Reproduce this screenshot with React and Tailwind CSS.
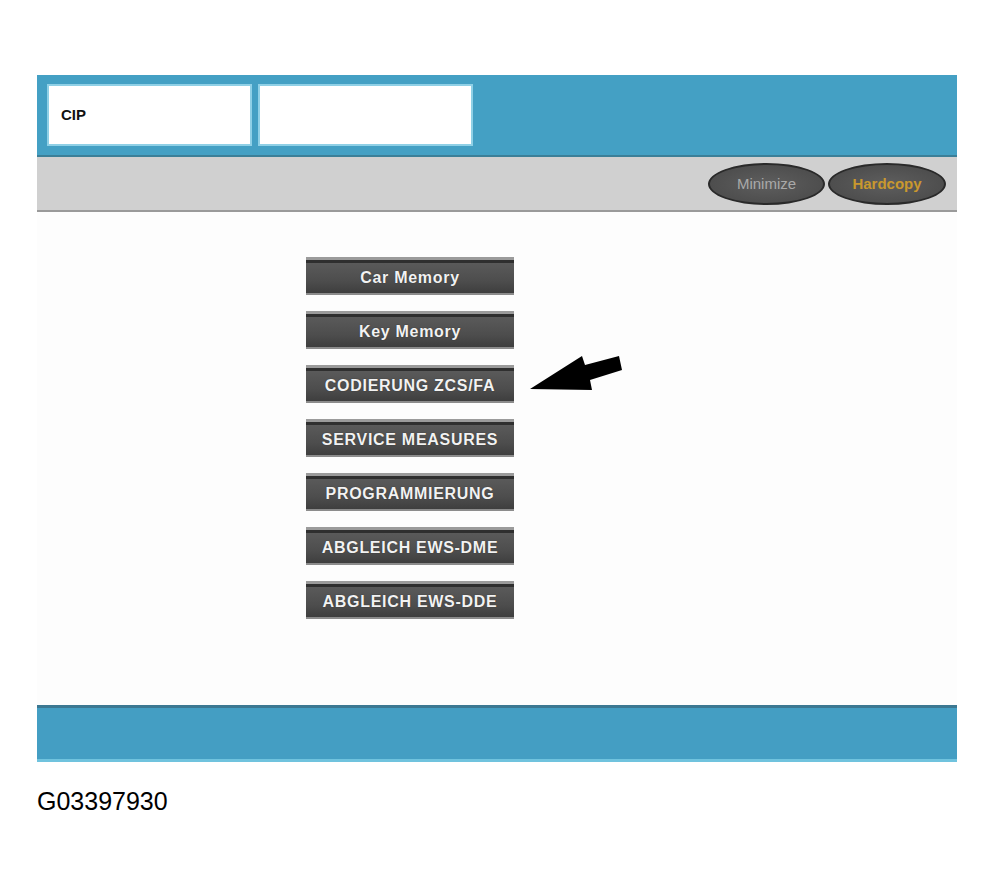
export default function App() {
  const buttons = [
    "Car Memory",
    "Key Memory",
    "CODIERUNG ZCS/FA",
    "SERVICE MEASURES",
    "PROGRAMMIERUNG",
    "ABGLEICH EWS-DME",
    "ABGLEICH EWS-DDE",
  ];

  return (
    <div className="min-h-[882px] w-[995px] bg-white font-['Liberation_Sans',Arial,sans-serif]">
      <div className="ml-[37px] w-[920px] pt-[75px]">
        {/* title bar */}
        <div className="flex h-[80px] gap-[6px] bg-[#44a0c4] pl-[10px] pt-[9px]">
          <div className="flex h-[62px] w-[205px] items-center border-2 border-[#8fd0e6] bg-white pl-[12px] text-[15px] font-bold text-[#111]">
            CIP
          </div>
          <div className="h-[62px] w-[215px] border-2 border-[#8fd0e6] bg-white" />
        </div>
        <div className="h-[2px] bg-[#3b7f98]" />
        {/* toolbar */}
        <div className="flex h-[53px] items-center justify-end gap-[3px] bg-[#d0d0d0] pr-[11px] pt-[1px]">
          <div className="flex h-[42px] w-[117px] items-center justify-center rounded-[50%] border-2 border-[#2a2a2a] bg-[radial-gradient(ellipse_at_center,#5e5e5e,#474747)] text-[15px] text-[#a9a9a9]">
            Minimize
          </div>
          <div className="flex h-[42px] w-[118px] items-center justify-center rounded-[50%] border-2 border-[#2a2a2a] bg-[radial-gradient(ellipse_at_center,#5e5e5e,#474747)] text-[15px] font-bold text-[#c9982e]">
            Hardcopy
          </div>
        </div>
        <div className="h-[2px] bg-[#9a9a9a]" />
        {/* menu area */}
        <div className="relative flex h-[493px] flex-col gap-[16px] bg-[#fdfdfd] pl-[269px] pt-[45px]">
          {buttons.map((b) => (
            <div
              key={b}
              className="flex h-[38px] w-[208px] flex-col bg-[#4a4a4a]"
            >
              <div className="h-[3px] bg-[#9b9b9b]" />
              <div className="h-[3px] bg-[#2f2f2f]" />
              <div className="flex flex-1 items-center justify-center bg-[linear-gradient(#5a5a5a,#4d4d4d_60%,#3e3e3e)] text-[16px] font-bold tracking-[0.7px] text-[#f2f2f2] [text-shadow:0_0_1px_#222]">
                {b}
              </div>
              <div className="h-[2px] bg-[#8c8c8c]" />
            </div>
          ))}
          <svg
            className="absolute left-[490px] top-[140px]"
            width="100"
            height="45"
            viewBox="527 350 100 45"
          >
            <polygon
              points="530,387 582,354 585,363 619,354 622,368 590,378 592,388"
              fill="#000"
            />
          </svg>
        </div>
        {/* status bar */}
        <div className="h-[3px] bg-[#3c7892]" />
        <div className="h-[51px] bg-[#449ec3]" />
        <div className="h-[3px] bg-[#70c3de]" />
        <div className="pt-[24px] text-[25px] leading-[30px] text-black">
          G03397930
        </div>
      </div>
    </div>
  );
}
